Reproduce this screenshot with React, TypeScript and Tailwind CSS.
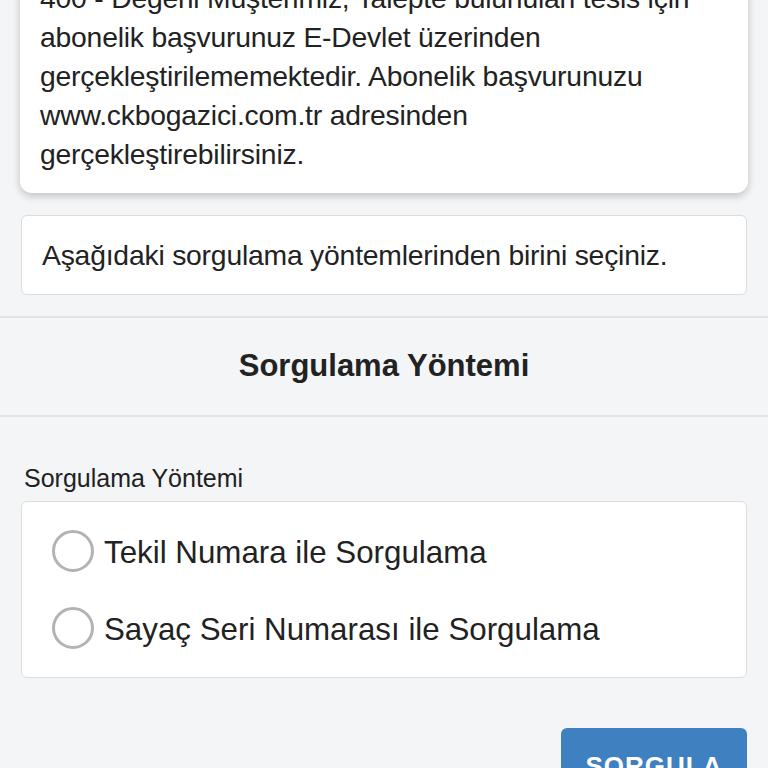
import { useState } from 'react';

const options = [
  { id: 'tekil', label: 'Tekil Numara ile Sorgulama' },
  { id: 'sayac', label: 'Sayaç Seri Numarası ile Sorgulama' },
];

const App = () => {
  const [selected, setSelected] = useState<string>('');

  return (
    <div
      className="h-[768px] overflow-hidden bg-[#f4f5f7] text-[#222222]"
      style={{ fontFamily: '"Liberation Sans", Arial, sans-serif' }}
    >
      <div className="px-[20px]">
        <div className="-mt-[41px] rounded-[12px] bg-white px-[20px] pt-[20px] pb-[19px] text-[28.3px] leading-[39px] tracking-[-0.2px] shadow-[0_3px_8px_rgba(0,0,0,0.22)]">
          <p>
            400 - Değerli Müşterimiz, Talepte bulunulan tesis için
            <br />
            abonelik başvurunuz E-Devlet üzerinden
            <br />
            gerçekleştirilememektedir. Abonelik başvurunuzu
            <br />
            www.ckbogazici.com.tr adresinden
            <br />
            gerçekleştirebilirsiniz.
          </p>
        </div>
      </div>

      <div className="mt-[22px] px-[21px]">
        <div className="flex h-[80px] items-center rounded-[6px] border border-[#dddddd] bg-white px-[20px] text-[28.3px] tracking-[-0.2px]">
          Aşağıdaki sorgulama yöntemlerinden birini seçiniz.
        </div>
      </div>

      <div className="mt-[21px] flex h-[101px] items-center justify-center border-y-2 border-[#e2e3e5] text-[31px] font-bold">
        Sorgulama Yöntemi
      </div>

      <div className="px-[21px]">
        <label className="mt-[47px] block pl-[3px] text-[25px] leading-[28px]">
          Sorgulama Yöntemi
        </label>
        <div className="mt-[9px] flex h-[177px] flex-col justify-center gap-[31px] rounded-[6px] border border-[#dddddd] bg-white pl-[30px]">
          {options.map((o) => (
            <button
              key={o.id}
              type="button"
              onClick={() => setSelected(o.id)}
              className="flex items-center gap-[10px] text-left text-[31.3px] leading-[42px]"
            >
              <span className="flex h-[42px] w-[42px] shrink-0 items-center justify-center rounded-full border-[3px] border-[#b3b3b3]">
                {selected === o.id && (
                  <span className="h-[20px] w-[20px] rounded-full bg-[#3e80c0]" />
                )}
              </span>
              <span className="pt-[4px]">{o.label}</span>
            </button>
          ))}
        </div>

        <div className="mt-[50px] flex justify-end">
          <button
            type="button"
            className="h-[76px] w-[186px] rounded-[6px] bg-[#3e80c0] text-[26px] font-bold tracking-[1px] text-white"
          >
            SORGULA
          </button>
        </div>
      </div>
    </div>
  );
};

export default App;
